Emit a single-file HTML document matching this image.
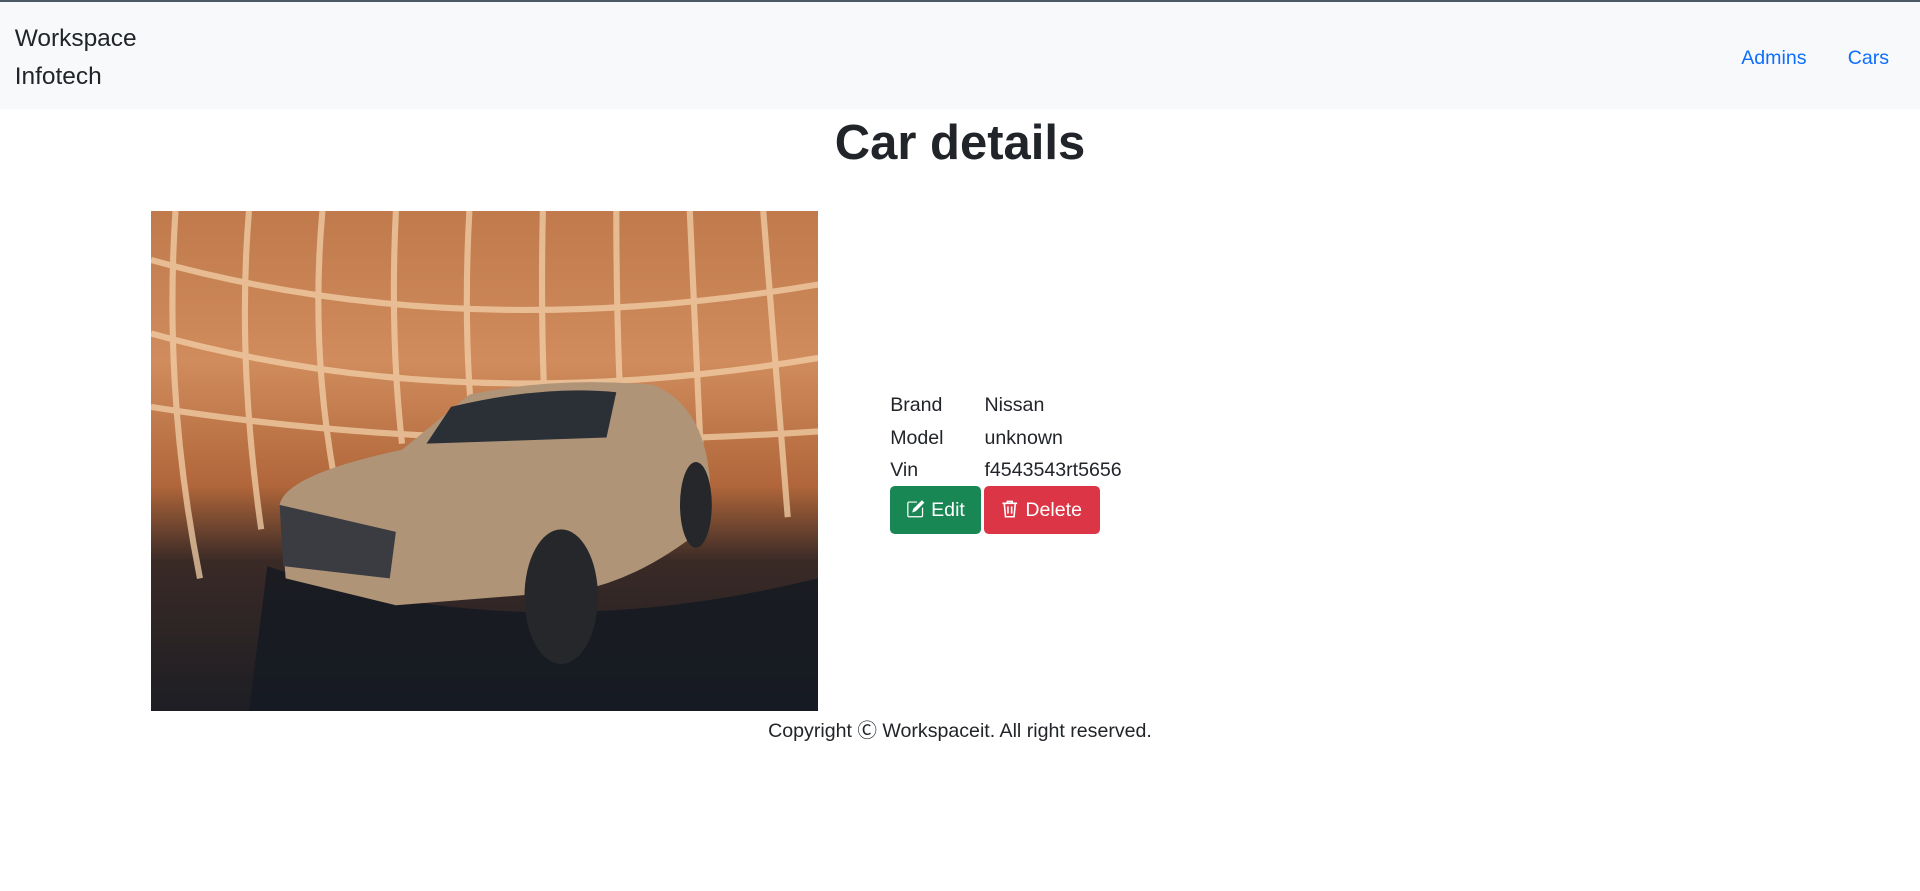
<!DOCTYPE html>
<html><head><meta charset="utf-8"><style>
html,body{margin:0;padding:0;background:#fff;}
body{width:1568px;height:728px;zoom:1.22449;font-family:"Liberation Sans",sans-serif;color:#212529;position:relative;overflow:hidden;font-size:16px;}
.nav{position:absolute;left:0;top:0;width:1568px;height:89px;background:#f8f9fa;border-top:2px solid #4b5a66;box-sizing:border-box;}
.brand{position:absolute;left:12px;top:15px;font-size:20px;line-height:31px;color:#212529;}
.nav a{position:absolute;top:37px;color:#0d6efd;text-decoration:none;font-size:16px;}
h1{position:absolute;left:0;width:1568px;top:93px;margin:0;text-align:center;font-size:40px;font-weight:600;line-height:48px;}
.img{position:absolute;left:123px;top:172px;width:545px;height:409px;overflow:hidden;
background:linear-gradient(180deg,#c07a4c 0%,#d08c5c 30%,#b0663a 55%,#3a2a26 70%,#1d1e24 100%);}
.t{position:absolute;font-size:16px;line-height:20px;}
.btn{position:absolute;top:397px;height:39px;border-radius:4px;color:#fff;font-size:16px;line-height:40px;box-sizing:border-box;}
.foot{position:absolute;left:0;width:1568px;top:583px;text-align:center;font-size:16px;}
</style></head><body>
<div class="nav">
<div class="brand">Workspace<br>Infotech</div>
<a style="left:1422px">Admins</a><a style="left:1509px">Cars</a>
</div>
<h1>Car details</h1>
<div class="img">
<svg width="545" height="409" viewBox="0 0 545 409">
<g stroke="#f3d0a8" stroke-width="5" fill="none" opacity="0.75">
<path d="M20 0 Q10 150 40 300"/><path d="M80 0 Q70 120 90 260"/><path d="M140 0 Q130 110 150 220"/>
<path d="M200 0 Q195 100 205 190"/><path d="M260 0 Q255 90 262 170"/><path d="M320 0 Q318 90 322 170"/>
<path d="M380 0 Q380 100 385 190"/><path d="M440 0 Q445 110 450 220"/><path d="M500 0 Q510 120 520 250"/>
<path d="M0 40 Q250 110 545 60"/><path d="M0 100 Q250 170 545 120"/><path d="M0 160 Q250 200 545 180"/>
</g>
<path d="M95 290 Q300 360 545 300 L545 409 L80 409 Z" fill="#151a22" opacity="0.85"/>
<path d="M105 240 Q110 215 205 195 L260 150 Q330 135 410 142 Q455 160 457 230 L450 260 Q400 300 350 310 L200 322 L110 300 Z" fill="#b09478"/>
<path d="M245 160 Q320 142 380 148 L372 185 L225 190 Z" fill="#2b2f36"/>
<path d="M105 240 L200 262 L195 300 L108 290 Z" fill="#3a3c42"/>
<ellipse cx="335" cy="315" rx="30" ry="55" fill="#26272b"/>
<ellipse cx="445" cy="240" rx="13" ry="35" fill="#26272b"/>
</svg>
</div>
<div class="t" style="left:727px;top:321px">Brand</div><div class="t" style="left:804px;top:321px">Nissan</div>
<div class="t" style="left:727px;top:348px">Model</div><div class="t" style="left:804px;top:348px">unknown</div>
<div class="t" style="left:727px;top:374px">Vin</div><div class="t" style="left:804px;top:374px">f4543543rt5656</div>
<div class="btn" style="left:727px;width:74px;background:#198754;padding-left:13px">
<svg width="16" height="16" viewBox="0 0 16 16" style="vertical-align:-2px" fill="#fff"><path d="M1 3.5A1.5 1.5 0 0 1 2.5 2H9v1H2.5a.5.5 0 0 0-.5.5v10a.5.5 0 0 0 .5.5h10a.5.5 0 0 0 .5-.5V7h1v6.5A1.5 1.5 0 0 1 12.5 15h-10A1.5 1.5 0 0 1 1 13.5z"/><path d="M13 1l2 2-7 7-3 1 1-3z"/></svg> Edit</div>
<div class="btn" style="left:804px;width:94px;background:#dc3545;padding-left:13px">
<svg width="16" height="16" viewBox="0 0 16 16" style="vertical-align:-2px" fill="none" stroke="#fff" stroke-width="1.3"><path d="M2 3.5h12M6 3.5V2h4v1.5M3.5 3.5l1 11h7l1-11M6.5 6v6M9.5 6v6"/></svg> Delete</div>
<div class="foot">Copyright Ⓒ Workspaceit. All right reserved.</div>
</body></html>
